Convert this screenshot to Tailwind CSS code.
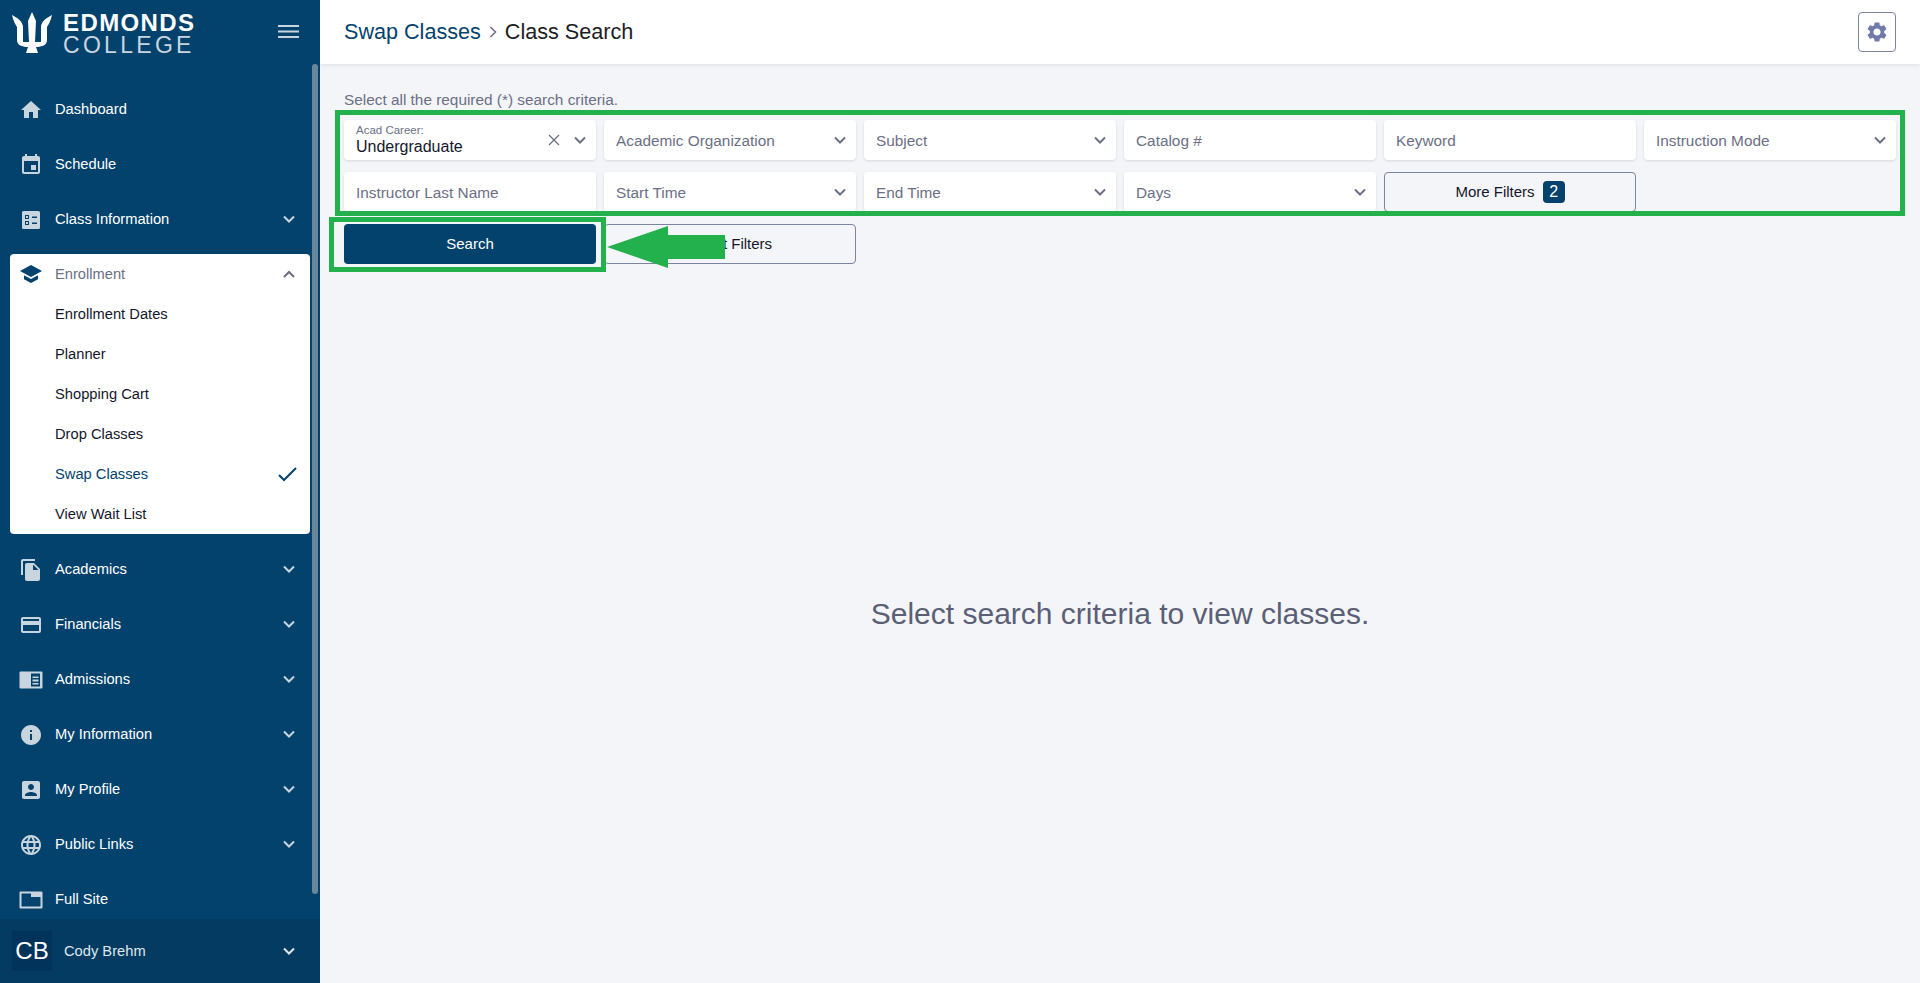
<!DOCTYPE html>
<html lang="en">
<head>
  <meta charset="UTF-8">
  <title>Class Search</title>
  <script src="https://cdn.jsdelivr.net/npm/@tailwindcss/browser@4"></script>
</head>
<body class="bg-[#f4f5f9] font-['Liberation_Sans',Arial,sans-serif] overflow-hidden">
<div class="flex h-[983px] relative">

  <!-- sidebar -->
  <aside class="w-[320px] shrink-0 bg-[#03426d] flex flex-col relative">
    <div class="h-[64px] shrink-0 flex items-center pl-[12px] pr-[21px] justify-between">
      <div class="flex items-center gap-[11px]">
        <svg class="w-[40px] h-[41px]" viewBox="0 0 40 41" fill="#fff"><path d="M20 0L24 9L23 30H29V15C29 10 34 6 40 3C39 8 37 12 35 15V28C35 33 30 35 24 35L26 41H14L16 35C10 35 5 33 5 28V15C3 12 1 8 0 3C6 6 11 10 11 15V30H17L16 9Z"/></svg>
        <div class="leading-none mt-[3px]">
          <div class="text-[24px] font-bold tracking-[1.4px] leading-[23px] text-white">EDMONDS</div>
          <div class="text-[23px] tracking-[3.3px] leading-[23px] text-[#c9d5de]">COLLEGE</div>
        </div>
      </div>
      <svg class="w-[21px] h-[13px] mb-[1px]" viewBox="0 0 21 13" fill="#c9d5de"><path d="M0 0h21v2H0zM0 5.500h21v2H0zM0 11h21v2H0z"/></svg>
    </div>

    <nav class="flex-1 min-h-0 flex flex-col pt-[18px] text-[14.7px] text-white">
      <a class="h-[55px] flex items-center pl-[19px] shrink-0"><svg class="w-[24px] h-[24px] mr-[12px] fill-[#c9d5de]" viewBox="0 0 24 24"><path d="M10 20v-6h4v6h5v-8h3L12 3 2 12h3v8z"/></svg>Dashboard</a>
      <a class="h-[55px] flex items-center pl-[19px] shrink-0"><svg class="w-[24px] h-[24px] mr-[12px] fill-[#c9d5de]" viewBox="0 0 24 24"><path d="M17 12h-5v5h5v-5zM16 1v2H8V1H6v2H5c-1.110 0-1.990.9-1.990 2L3 19c0 1.100.89 2 2 2h14c1.100 0 2-.9 2-2V5c0-1.100-.9-2-2-2h-1V1h-2zm3 18H5V8h14v11z"/></svg>Schedule</a>
      <a class="h-[55px] flex items-center pl-[19px] pr-[24px] shrink-0"><svg class="w-[24px] h-[24px] mr-[12px] fill-[#c9d5de]" viewBox="0 0 24 24"><path fill-rule="evenodd" d="M4.500 3h15A1.500 1.500 0 0 1 21 4.500v15a1.500 1.500 0 0 1-1.500 1.500h-15A1.500 1.500 0 0 1 3 19.500v-15A1.500 1.500 0 0 1 4.500 3zM6 7v4h4V7zm1 1h2v2H7zm6 .5V10h5V8.500zM6 13v4h4v-4zm1 1h2v2H7zm6 .5V16h5v-1.500z"/></svg><span class="flex-1">Class Information</span><svg class="w-[14px] h-[9px]" viewBox="0 0 14 9" fill="none" stroke="#c9d5de" stroke-width="2"><path d="M2 1.500l5 5 5-5"/></svg></a>

      <div class="mx-[10px] mt-[7px] mb-[8px] h-[280px] bg-white rounded-[4px] shrink-0 flex flex-col text-[#14172b]">
        <div class="h-[40px] flex items-center pl-[9px] pr-[14px] shrink-0 text-[#6b6f85]"><svg class="w-[24px] h-[24px] mr-[12px] fill-[#03426d]" viewBox="0 0 24 24"><path d="M5 13.180v4L12 21l7-3.820v-4L12 17l-7-3.820zM12 3L1 9l11 6 11-6z"/></svg><span class="flex-1">Enrollment</span><svg class="w-[14px] h-[9px]" viewBox="0 0 14 9" fill="none" stroke="#6b6f85" stroke-width="2"><path d="M2 7l5-5 5 5"/></svg></div>
        <a class="h-[40px] flex items-center pl-[45px] shrink-0">Enrollment Dates</a>
        <a class="h-[40px] flex items-center pl-[45px] shrink-0">Planner</a>
        <a class="h-[40px] flex items-center pl-[45px] shrink-0">Shopping Cart</a>
        <a class="h-[40px] flex items-center pl-[45px] shrink-0">Drop Classes</a>
        <a class="h-[40px] flex items-center pl-[45px] pr-[13px] shrink-0 text-[#03426d]"><span class="flex-1">Swap Classes</span><svg class="w-[19px] h-[15px]" viewBox="0 0 19 15" fill="none" stroke="#03426d" stroke-width="2"><path d="M1 8l5 5L18 1"/></svg></a>
        <a class="h-[40px] flex items-center pl-[45px] shrink-0">View Wait List</a>
      </div>

      <a class="h-[55px] flex items-center pl-[19px] pr-[24px] shrink-0"><svg class="w-[24px] h-[24px] mr-[12px] fill-[#c9d5de]" viewBox="0 0 24 24"><path d="M16 1H4c-1.100 0-2 .9-2 2v14h2V3h12V1zm-1 4l6 6v10c0 1.100-.9 2-2 2H7.990C6.890 23 6 22.100 6 21l.01-14c0-1.100.89-2 1.990-2h7zm-1 7h5.500L14 6.500V12z"/></svg><span class="flex-1">Academics</span><svg class="w-[14px] h-[9px]" viewBox="0 0 14 9" fill="none" stroke="#c9d5de" stroke-width="2"><path d="M2 1.500l5 5 5-5"/></svg></a>
      <a class="h-[55px] flex items-center pl-[19px] pr-[24px] shrink-0"><svg class="w-[24px] h-[24px] mr-[12px] fill-[#c9d5de]" viewBox="0 0 24 24"><path d="M20 4H4c-1.110 0-1.990.89-1.990 2L2 18c0 1.110.89 2 2 2h16c1.110 0 2-.89 2-2V6c0-1.110-.89-2-2-2zm0 14H4v-6h16v6zm0-10H4V6h16v2z"/></svg><span class="flex-1">Financials</span><svg class="w-[14px] h-[9px]" viewBox="0 0 14 9" fill="none" stroke="#c9d5de" stroke-width="2"><path d="M2 1.500l5 5 5-5"/></svg></a>
      <a class="h-[55px] flex items-center pl-[19px] pr-[24px] shrink-0"><svg class="w-[24px] h-[24px] mr-[12px] fill-[#c9d5de]" viewBox="0 0 24 24"><path fill-rule="evenodd" d="M1.500 3.500h21a1 1 0 0 1 1 1v15a1 1 0 0 1-1 1h-21a1 1 0 0 1-1-1v-15a1 1 0 0 1 1-1zM12 5.500v13h9v-13zm1.500 3h6V10h-6zm0 3h6v2h-6zm0 3.500h6v1.500h-6z"/></svg><span class="flex-1">Admissions</span><svg class="w-[14px] h-[9px]" viewBox="0 0 14 9" fill="none" stroke="#c9d5de" stroke-width="2"><path d="M2 1.500l5 5 5-5"/></svg></a>
      <a class="h-[55px] flex items-center pl-[19px] pr-[24px] shrink-0"><svg class="w-[24px] h-[24px] mr-[12px] fill-[#c9d5de]" viewBox="0 0 24 24"><path d="M12 2C6.480 2 2 6.480 2 12s4.480 10 10 10 10-4.480 10-10S17.520 2 12 2zm1 15h-2v-6h2v6zm0-8h-2V7h2v2z"/></svg><span class="flex-1">My Information</span><svg class="w-[14px] h-[9px]" viewBox="0 0 14 9" fill="none" stroke="#c9d5de" stroke-width="2"><path d="M2 1.500l5 5 5-5"/></svg></a>
      <a class="h-[55px] flex items-center pl-[19px] pr-[24px] shrink-0"><svg class="w-[24px] h-[24px] mr-[12px] fill-[#c9d5de]" viewBox="0 0 24 24"><path d="M3 5v14c0 1.100.89 2 2 2h14c1.100 0 2-.9 2-2V5c0-1.100-.9-2-2-2H5c-1.110 0-2 .9-2 2zm12 4c0 1.660-1.340 3-3 3s-3-1.340-3-3 1.340-3 3-3 3 1.340 3 3zm-9 8c0-2 4-3.100 6-3.100s6 1.100 6 3.100v1H6v-1z"/></svg><span class="flex-1">My Profile</span><svg class="w-[14px] h-[9px]" viewBox="0 0 14 9" fill="none" stroke="#c9d5de" stroke-width="2"><path d="M2 1.500l5 5 5-5"/></svg></a>
      <a class="h-[55px] flex items-center pl-[19px] pr-[24px] shrink-0"><svg class="w-[24px] h-[24px] mr-[12px] fill-[#c9d5de]" viewBox="0 0 24 24"><path d="M11.990 2C6.470 2 2 6.480 2 12s4.470 10 9.990 10C17.520 22 22 17.520 22 12S17.520 2 11.990 2zm6.930 6h-2.950c-.32-1.250-.78-2.450-1.380-3.560 1.840.63 3.370 1.910 4.330 3.560zM12 4.040c.83 1.200 1.480 2.530 1.910 3.960h-3.820c.43-1.430 1.080-2.760 1.910-3.960zM4.260 14C4.100 13.360 4 12.690 4 12s.1-1.360.26-2h3.380c-.08.66-.14 1.320-.14 2 0 .68.06 1.340.14 2H4.260zm.82 2h2.950c.32 1.250.78 2.450 1.380 3.560-1.840-.63-3.370-1.900-4.330-3.560zm2.950-8H5.080c.96-1.660 2.490-2.930 4.330-3.560C8.810 5.550 8.350 6.750 8.030 8zM12 19.960c-.83-1.200-1.480-2.530-1.910-3.960h3.820c-.43 1.430-1.080 2.760-1.910 3.960zM14.340 14H9.660c-.09-.66-.16-1.320-.16-2 0-.68.07-1.350.16-2h4.680c.09.650.16 1.320.16 2 0 .68-.07 1.340-.16 2zm.25 5.560c.6-1.110 1.060-2.310 1.380-3.560h2.950c-.96 1.650-2.490 2.930-4.330 3.560zM16.360 14c.08-.66.14-1.320.14-2 0-.68-.06-1.340-.14-2h3.380c.16.64.26 1.310.26 2s-.1 1.360-.26 2h-3.380z"/></svg><span class="flex-1">Public Links</span><svg class="w-[14px] h-[9px]" viewBox="0 0 14 9" fill="none" stroke="#c9d5de" stroke-width="2"><path d="M2 1.500l5 5 5-5"/></svg></a>
      <a class="h-[55px] flex items-center pl-[19px] shrink-0"><svg class="w-[24px] h-[24px] mr-[12px] fill-[#c9d5de]" viewBox="0 0 24 24"><path fill-rule="evenodd" d="M1.500 3.500h21a1 1 0 0 1 1 1v15a1 1 0 0 1-1 1h-21a1 1 0 0 1-1-1v-15a1 1 0 0 1 1-1zm1 2v13h19V9H12V5.500z"/></svg>Full Site</a>
    </nav>

    <div class="h-[64px] shrink-0 bg-[#033b62] flex items-center pl-[12px] pr-[24px] text-[14.7px] text-[#dfe6ec]">
      <div class="w-[40px] h-[40px] bg-[#02335a] flex items-center justify-center text-[24px] text-white mr-[12px]">CB</div>
      <span class="flex-1">Cody Brehm</span>
      <svg class="w-[14px] h-[9px]" viewBox="0 0 14 9" fill="none" stroke="#dfe6ec" stroke-width="2"><path d="M2 1.500l5 5 5-5"/></svg>
    </div>

    <div class="absolute left-[312px] top-[64px] w-[6px] h-[830px] rounded-full bg-[#6c8699]"></div>
  </aside>

  <!-- main -->
  <main class="flex-1 flex flex-col min-w-0">
    <header class="h-[64px] bg-white shadow-[0_2px_3px_#e4e5ec] flex items-center justify-between pl-[24px] pr-[24px] text-[21.6px] shrink-0">
      <div class="flex items-center">
        <span class="text-[#03426d]">Swap Classes</span>
        <svg class="w-[8px] h-[12px] mx-[8px]" viewBox="0 0 8 12" fill="none" stroke="#6b6f85" stroke-width="1.500"><path d="M1.500 1l5 5-5 5"/></svg>
        <span class="text-[#1c1c24]">Class Search</span>
      </div>
      <button class="w-[38px] h-[40px] border border-[#7c85a0] rounded-[4px] flex items-center justify-center">
        <svg class="w-[24px] h-[24px] fill-[#6f7aa8]" viewBox="0 0 24 24"><path d="M19.140 12.940c.04-.3.06-.61.06-.94 0-.32-.02-.64-.07-.94l2.030-1.580c.18-.14.23-.41.12-.61l-1.920-3.320c-.12-.22-.37-.29-.59-.22l-2.390.96c-.5-.38-1.030-.7-1.620-.94l-.36-2.540c-.04-.24-.24-.41-.48-.41h-3.840c-.24 0-.43.17-.47.41l-.36 2.540c-.59.24-1.130.57-1.620.94l-2.390-.96c-.22-.08-.47 0-.59.22L2.740 8.870c-.12.21-.08.47.12.61l2.030 1.580c-.05.3-.09.63-.09.94s.02.64.07.94l-2.030 1.580c-.18.14-.23.41-.12.61l1.920 3.320c.12.22.37.29.59.22l2.390-.96c.5.38 1.030.7 1.620.94l.36 2.540c.05.24.24.41.48.41h3.840c.24 0 .44-.17.47-.41l.36-2.540c.59-.24 1.130-.56 1.620-.94l2.390.96c.22.08.47 0 .59-.22l1.920-3.320c.12-.22.07-.47-.12-.61l-2.010-1.580zM12 15.600c-1.980 0-3.600-1.620-3.600-3.600s1.620-3.600 3.600-3.600 3.600 1.620 3.600 3.600-1.620 3.600-3.600 3.600z"/></svg>
      </button>
    </header>

    <section class="pl-[24px] pr-[24px] flex-1 flex flex-col">
      <p class="text-[15.36px] text-[#6b6f85] h-[16px] leading-[16px] mt-[28px] mb-[12px]">Select all the required (*) search criteria.</p>

      <div class="grid grid-cols-6 gap-x-[8px] gap-y-[12px] text-[15.36px] text-[#6b6f85]">
        <div class="h-[40px] bg-white rounded-[4px] shadow-sm flex items-center pl-[12px] pr-[9px]">
          <div class="flex-1">
            <div class="text-[11.5px] leading-[15px] -mt-[1px]">Acad Career:</div>
            <div class="text-[16px] leading-[18px] text-[#14172b]">Undergraduate</div>
          </div>
          <svg class="w-[12px] h-[12px] mr-[13px]" viewBox="0 0 12 12" fill="none" stroke="#6b6f85" stroke-width="1.300"><path d="M1 1l10 10M11 1L1 11"/></svg>
          <svg class="w-[14px] h-[9px]" viewBox="0 0 14 9" fill="none" stroke="#6b6f85" stroke-width="2"><path d="M2 1.500l5 5 5-5"/></svg>
        </div>
        <div class="h-[40px] pt-[1px] bg-white rounded-[4px] shadow-sm flex items-center justify-between pl-[12px] pr-[9px]">Academic Organization<svg class="w-[14px] h-[9px]" viewBox="0 0 14 9" fill="none" stroke="#6b6f85" stroke-width="2"><path d="M2 1.500l5 5 5-5"/></svg></div>
        <div class="h-[40px] pt-[1px] bg-white rounded-[4px] shadow-sm flex items-center justify-between pl-[12px] pr-[9px]">Subject<svg class="w-[14px] h-[9px]" viewBox="0 0 14 9" fill="none" stroke="#6b6f85" stroke-width="2"><path d="M2 1.500l5 5 5-5"/></svg></div>
        <div class="h-[40px] pt-[1px] bg-white rounded-[4px] shadow-sm flex items-center pl-[12px]">Catalog #</div>
        <div class="h-[40px] pt-[1px] bg-white rounded-[4px] shadow-sm flex items-center pl-[12px]">Keyword</div>
        <div class="h-[40px] pt-[1px] bg-white rounded-[4px] shadow-sm flex items-center justify-between pl-[12px] pr-[9px]">Instruction Mode<svg class="w-[14px] h-[9px]" viewBox="0 0 14 9" fill="none" stroke="#6b6f85" stroke-width="2"><path d="M2 1.500l5 5 5-5"/></svg></div>

        <div class="h-[40px] pt-[1px] bg-white rounded-[4px] shadow-sm flex items-center pl-[12px]">Instructor Last Name</div>
        <div class="h-[40px] pt-[1px] bg-white rounded-[4px] shadow-sm flex items-center justify-between pl-[12px] pr-[9px]">Start Time<svg class="w-[14px] h-[9px]" viewBox="0 0 14 9" fill="none" stroke="#6b6f85" stroke-width="2"><path d="M2 1.500l5 5 5-5"/></svg></div>
        <div class="h-[40px] pt-[1px] bg-white rounded-[4px] shadow-sm flex items-center justify-between pl-[12px] pr-[9px]">End Time<svg class="w-[14px] h-[9px]" viewBox="0 0 14 9" fill="none" stroke="#6b6f85" stroke-width="2"><path d="M2 1.500l5 5 5-5"/></svg></div>
        <div class="h-[40px] pt-[1px] bg-white rounded-[4px] shadow-sm flex items-center justify-between pl-[12px] pr-[9px]">Days<svg class="w-[14px] h-[9px]" viewBox="0 0 14 9" fill="none" stroke="#6b6f85" stroke-width="2"><path d="M2 1.500l5 5 5-5"/></svg></div>
        <button class="h-[40px] border border-[#7c85a0] rounded-[4px] flex items-center justify-center gap-[8px] text-[15px] text-[#14172b]">More Filters <span class="w-[22px] h-[22px] rounded-[4px] bg-[#03426d] text-white text-[16px] flex items-center justify-center">2</span></button>
      </div>

      <div class="grid grid-cols-6 gap-x-[8px] mt-[12px] text-[15px]">
        <button class="h-[40px] bg-[#03426d] rounded-[4px] text-white">Search</button>
        <button class="h-[40px] border border-[#7c85a0] rounded-[4px] text-[#14172b]">Reset Filters</button>
      </div>

      <div class="flex-1 flex items-center justify-center pb-[20px]">
        <p class="text-[30px] text-[#5b5f75]">Select search criteria to view classes.</p>
      </div>
    </section>
  </main>

  <!-- annotations drawn on top of the screenshot -->
  <div class="absolute left-[335px] top-[110px] w-[1570px] h-[106px] border-[5px] border-[#22b14c]"></div>
  <div class="absolute left-[329px] top-[217px] w-[277px] h-[55px] border-[5px] border-[#22b14c]"></div>
  <svg class="absolute left-[600px] top-[220px]" width="130" height="54" viewBox="0 0 130 54" fill="#22b14c"><path d="M7 27L68 6v9h57v24H68v9z"/></svg>
</div>
</body>
</html>
